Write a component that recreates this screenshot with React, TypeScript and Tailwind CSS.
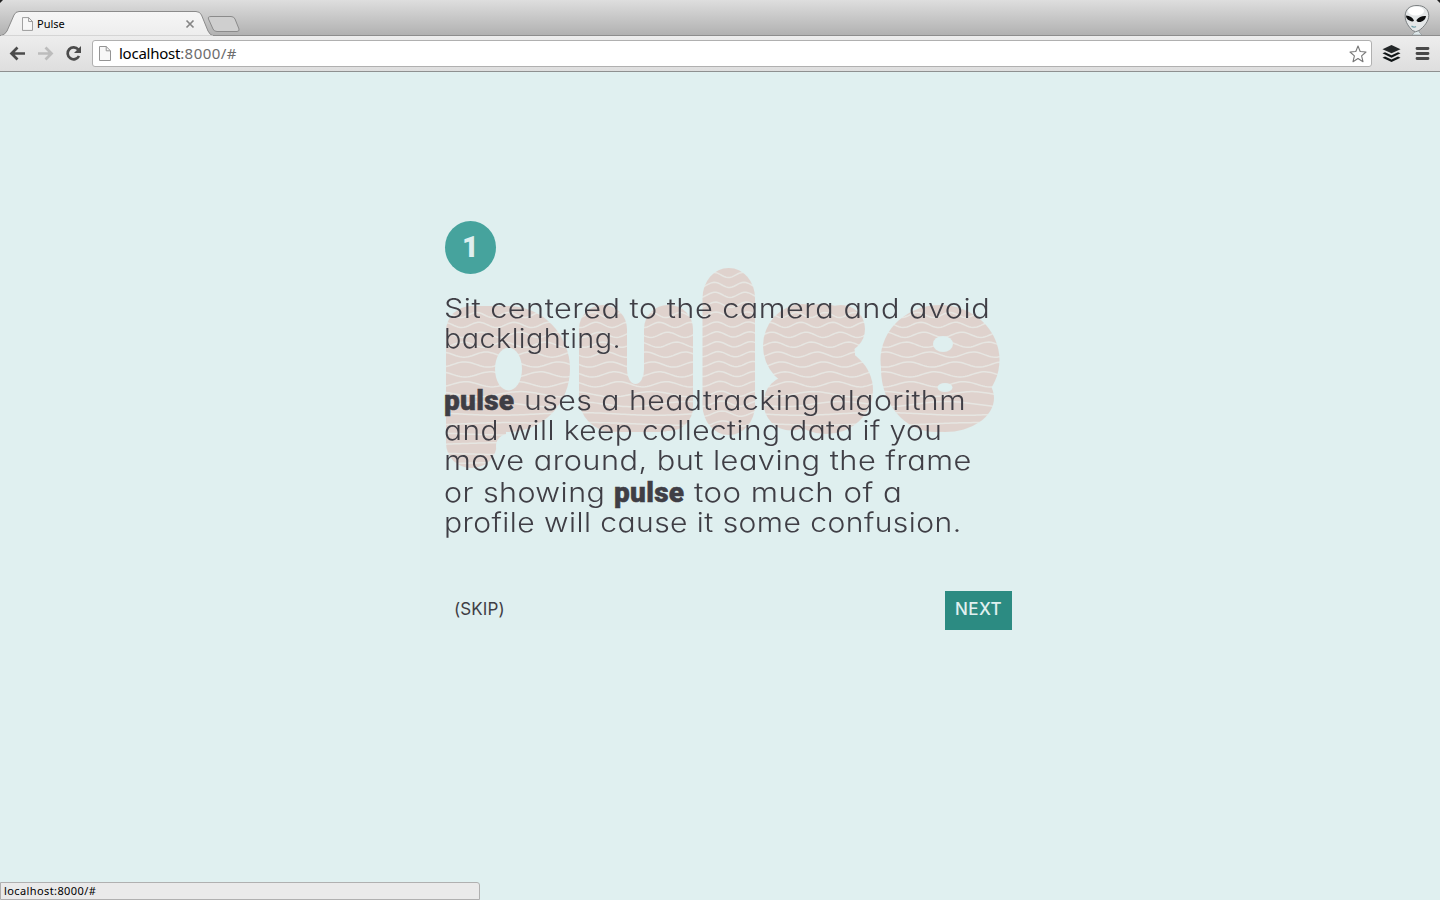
import React from "react";

type Blob = { x0: number; x1: number; top: number; bottom: number; len: number; phase: number; drift: number; grow: number };

const blobs: Blob[] = [
  { x0: 444, x1: 572, top: 315, bottom: 466, len: 32, phase: 4.6, drift: 0.1, grow: 3 },
  { x0: 577, x1: 695, top: 315, bottom: 434, len: 29, phase: 1.2, drift: -0.3, grow: 2.6 },
  { x0: 700, x1: 757, top: 275, bottom: 432, len: 29, phase: 1.7, drift: -0.05, grow: 0.6 },
  { x0: 761, x1: 875, top: 315, bottom: 434, len: 29, phase: 3.4, drift: -0.35, grow: 2.6 },
  { x0: 879, x1: 1002, top: 315, bottom: 434, len: 32, phase: 3.4, drift: 0.1, grow: 3 },
];

function waves(b: Blob, index: number) {
  const out: string[] = [];
  const mirrored = index === 0 || index === 4;
  let row = 0;
  for (let y = b.top; y < b.bottom; y += 9.9) {
    const flat = index !== 2 && row > 7 ? row - 7 : 0;
    const len = b.len + row * b.grow + flat * 30;
    const flip = mirrored && row > 2 && row % 2 === 1 ? Math.PI : 0;
    const amp = flat > 2 ? 1.3 : 2.6;
    let d = "";
    for (let x = b.x0; x <= b.x1; x += 2) {
      const v = y + amp * Math.sin(((x - b.x0) / len) * Math.PI * 2 + b.phase + row * b.drift + flip);
      d += (d ? "L" : "M") + x + " " + v.toFixed(2);
    }
    out.push(d);
    row++;
  }
  return out;
}

function Watermark() {
  return (
    <svg className="pointer-events-none absolute left-0 top-0 h-[450px] w-[600px]" viewBox="420 180 600 450" aria-hidden="true">
      <defs>
        <mask id="logo" maskUnits="userSpaceOnUse" x="420" y="180" width="600" height="450">
          <g fill="#fff">
            <rect x="446" y="306" width="51" height="162" rx="25" />
            <rect x="446" y="330" width="53" height="104" />
            <ellipse cx="508" cy="369" rx="62" ry="63" />
            <rect x="470" y="306" width="40" height="40" />
            <rect x="490" y="420" width="16" height="22" />
            <rect x="579" y="305" width="48" height="115" rx="24" />
            <rect x="644" y="305" width="49" height="126" rx="24" />
            <rect x="579" y="350" width="114" height="82" rx="34" />
            <rect x="702.5" y="268" width="52.5" height="167" rx="26" ry="30" />
            <ellipse cx="803" cy="346" rx="40" ry="42" />
            <ellipse cx="822" cy="330" rx="36" ry="26" />
            <circle cx="841" cy="329" r="24" />
            <ellipse cx="837" cy="354" rx="18" ry="20" />
            <ellipse cx="826" cy="390" rx="47" ry="44" />
            <circle cx="791" cy="403" r="27.5" />
            <rect x="779" y="372" width="30" height="14" />
            <rect x="790" y="345" width="50" height="70" />
            <ellipse cx="940" cy="360" rx="59.5" ry="55" />
            <ellipse cx="935" cy="369" rx="54" ry="63" />
            <ellipse cx="945" cy="398" rx="49" ry="34" />
          </g>
          <g fill="#000">
            <ellipse cx="508" cy="446" rx="12" ry="12" />
            <ellipse cx="508.5" cy="369" rx="13.5" ry="21.5" />
            <rect x="627" y="290" width="17" height="94" rx="8.5" ry="14" />
            <ellipse cx="943" cy="344" rx="10" ry="8" />
            <ellipse cx="945" cy="387.5" rx="7.5" ry="4.5" />
          </g>
        </mask>
      </defs>
      <g mask="url(#logo)">
        <rect x="420" y="180" width="600" height="450" fill="#dfd2cd" />
        <g fill="none" stroke="#e6e6e2" strokeWidth="1.5">
          {blobs.map((b, n) => waves(b, n).map((d, i) => <path key={b.x0 + "-" + i} d={d} />))}
        </g>
      </g>
    </svg>
  );
}

function PageIcon({ className }: { className: string }) {
  return (
    <svg className={className} viewBox="0 0 12 15" fill="#f7f7f7" stroke="#949494">
      <path d="M.5.5h6.700l4.300 4.300v9.700H.5z" />
      <path d="M7.200.5v4.300h4.300" fill="none" />
    </svg>
  );
}

function TabStrip() {
  return (
    <div className="relative h-9 bg-linear-to-b from-[#dedede] to-[#b0b0b0]">
      <svg className="absolute left-0 top-0 h-9 w-[1440px]" viewBox="0 0 1440 36">
        <defs>
          <linearGradient id="tab" x1="0" y1="0" x2="0" y2="1">
            <stop offset="0" stopColor="#f6f6f6" />
            <stop offset="1" stopColor="#ededed" />
          </linearGradient>
        </defs>
        <path d="M0 0H3L0 3zM1440 0H1437L1440 3z" fill="#222" />
        <path d="M0 35.500H1440" stroke="#8d8d8d" />
        <path d="M0 36Q5 35 7 31L14 15Q15.500 11.500 19 11.500H196Q200 11.500 201.500 15L208 31Q210 35.500 214 36z" fill="url(#tab)" stroke="#8b8b8b" />
        <path d="M1 36.500H213" stroke="#ededed" strokeWidth="2" />
        <path d="M211 16.500H231Q234 16.500 235 19L239 29Q239.500 31.500 237 31.500H217Q214 31.500 213 29L208.500 19Q207.500 16.500 211 16.500z" fill="#cfcfcf" stroke="#8b8b8b" />
        <path d="M186.500 20.500l7 7m0-7l-7 7" stroke="#858585" strokeWidth="1.700" />
        <g>
          <path d="M1415 29h4v3l3 3h-10l3-3z" fill="#dce6e8" stroke="#8b9294" strokeWidth=".6" />
          <path d="M1417 5.500C1409 5.500 1405.200 10 1405.200 16C1405 22 1409 27 1412.500 30.500Q1415.500 33 1419 30.500C1424 27 1428.800 21 1428.800 15.500C1428.500 9 1424 5.500 1417 5.500z" fill="#e4e7e8" stroke="#6f7476" strokeWidth=".9" />
          <ellipse cx="1416" cy="11" rx="8" ry="4.500" fill="#fff" />
          <path d="M1406 15.500Q1412 16 1414 20.500Q1413 22.500 1409.500 20.500Q1406 19 1406 15.500zM1426 16Q1420 15.500 1416.500 20Q1416.500 22.500 1420.500 22Q1425.500 20.500 1426 16z" fill="#0c0d0e" />
          <path d="M1411.500 26Q1414 28 1416 26.500" stroke="#6ea0aa" fill="none" strokeWidth="1.200" />
        </g>
      </svg>
      <div className="relative flex h-9 items-start pl-[22px] pt-[17px]">
        <PageIcon className="h-[14px] w-[11px]" />
        <span className="ml-1 text-[11px] leading-[14px] text-black">Pulse</span>
      </div>
    </div>
  );
}

function Toolbar() {
  return (
    <div className="flex h-9 items-center border-b border-[#8e9090] bg-linear-to-b from-[#ededed] to-[#dedede]">
      <svg className="h-9 w-[92px] shrink-0" viewBox="0 36 92 36" fill="none">
        <path d="M25 53.500H12M17.500 47.500L11.500 53.500L17.500 59.500" stroke="#4b4b4b" strokeWidth="2.700" />
        <path d="M38 53.500H51M45.500 47.500L51.500 53.500L45.500 59.500" stroke="#bcbcbc" strokeWidth="2.700" />
        <path d="M78.300 49.500A6 6 0 1 0 79 56" stroke="#4b4b4b" strokeWidth="2.700" />
        <path d="M81 46v7h-7z" fill="#4b4b4b" />
      </svg>
      <div className="flex h-[27px] flex-1 items-center rounded-[3px] border border-[#b0b0b0] bg-white pl-1.5 pr-1">
        <PageIcon className="h-[15px] w-3" />
        <span className="ml-2 pb-[2px] text-[15px] leading-5 tracking-[-0.25px] text-black">
          localhost<span className="tracking-[0.45px] text-[#6c6c6c]">:8000/#</span>
        </span>
        <svg className="ml-auto h-[18px] w-[18px]" viewBox="0 0 18 18">
          <path d="M9 1L11.200 6.500L17 7L12.600 10.800L14 16.700L9 13.500L4 16.700L5.400 10.800L1 7L6.800 6.500z" fill="#fff" stroke="#777" strokeWidth="1.100" strokeLinejoin="round" />
        </svg>
      </div>
      <svg className="h-9 w-[68px] shrink-0" viewBox="1372 36 68 36">
        <path d="M1391.500 45L1400.500 49.300L1391.500 53.300L1382.500 49.300z" fill="#242829" />
        <path d="M1382.500 53.300L1385 52.200L1391.500 55.200L1398 52.200L1400.500 53.300L1391.500 57.700zM1382.500 57.700L1385 56.500L1391.500 59.500L1398 56.500L1400.500 57.700L1391.500 62z" fill="#111617" />
        <path d="M1417 48.500H1428M1417 53.500H1428M1417 58.500H1428" stroke="#494949" strokeWidth="2.800" strokeLinecap="round" />
      </svg>
    </div>
  );
}

function Brand() {
  return <strong className="inline-block w-[80px] shrink-0 font-[Roboto] text-[28px] font-black tracking-[0.3px] [-webkit-text-stroke:0.5px_#3f3e45]">pulse</strong>;
}

const line = "h-[30px] w-max origin-left whitespace-pre leading-[30px]";
const brandLine = "flex h-[32px] items-baseline whitespace-pre pt-[2px] leading-[30px]";

function Card() {
  return (
    <main className="relative ml-[420px] mt-[108px] h-[450px] w-[600px] bg-[#dfefef]">
      <Watermark />
      <div className="relative flex h-full flex-col pl-[25px] pt-[41px] text-[#3f3e45]">
        <div className="flex h-[53px] w-[51px] items-center justify-center rounded-[50%] bg-[#46a39d] pt-px font-[Roboto] text-[29px] font-black text-[#dfefef]">1</div>
        <div className="-ml-px mt-5 font-[Inter] text-[27px] font-light tracking-[0.4px] [font-feature-settings:'cv11']">
          <div className={line + " scale-x-[1.138]"}>Sit centered to the camera and avoid</div>
          <div className={line + " scale-x-[1.067]"}>backlighting.</div>
          <div className="h-[30px]" />
          <div className={brandLine}>
            <Brand />
            <span className="origin-left scale-x-[1.12]">uses a headtracking algorithm</span>
          </div>
          <div className={line + " scale-x-[1.107]"}>and will keep collecting data if you</div>
          <div className={line + " scale-x-[1.139]"}>move around, but leaving the frame</div>
          <div className={brandLine}>
            <span className="w-[170px] shrink-0">
              <span className="inline-block origin-left scale-x-[1.127]">or showing</span>
            </span>
            <Brand />
            <span className="origin-left scale-x-[1.158]">too much of a</span>
          </div>
          <div className={line + " scale-x-[1.113]"}>profile will cause it some confusion.</div>
        </div>
        <div className="mt-auto flex items-center justify-between pr-2 font-[Inter] text-[17px]">
          <button className="h-[39px] px-[9px] pb-px tracking-[0.1px]">(SKIP)</button>
          <button className="h-[39px] w-[67px] bg-[#2c8b82] pb-px font-medium tracking-[0.4px] text-[#e0f0f0]">NEXT</button>
        </div>
      </div>
    </main>
  );
}

export default function App() {
  return (
    <div className="relative h-[900px] w-[1440px] overflow-hidden bg-[#e0f0f0] font-['Noto_Sans',sans-serif]">
      <TabStrip />
      <Toolbar />
      <Card />
      <div className="absolute bottom-0 left-0 flex h-[18px] w-[480px] items-center rounded-tr-[3px] border border-[#b0b0b0] bg-[#eaeaea] pl-[3px] text-[11px] tracking-[0.4px] text-black">
        localhost:8000/#
      </div>
    </div>
  );
}
